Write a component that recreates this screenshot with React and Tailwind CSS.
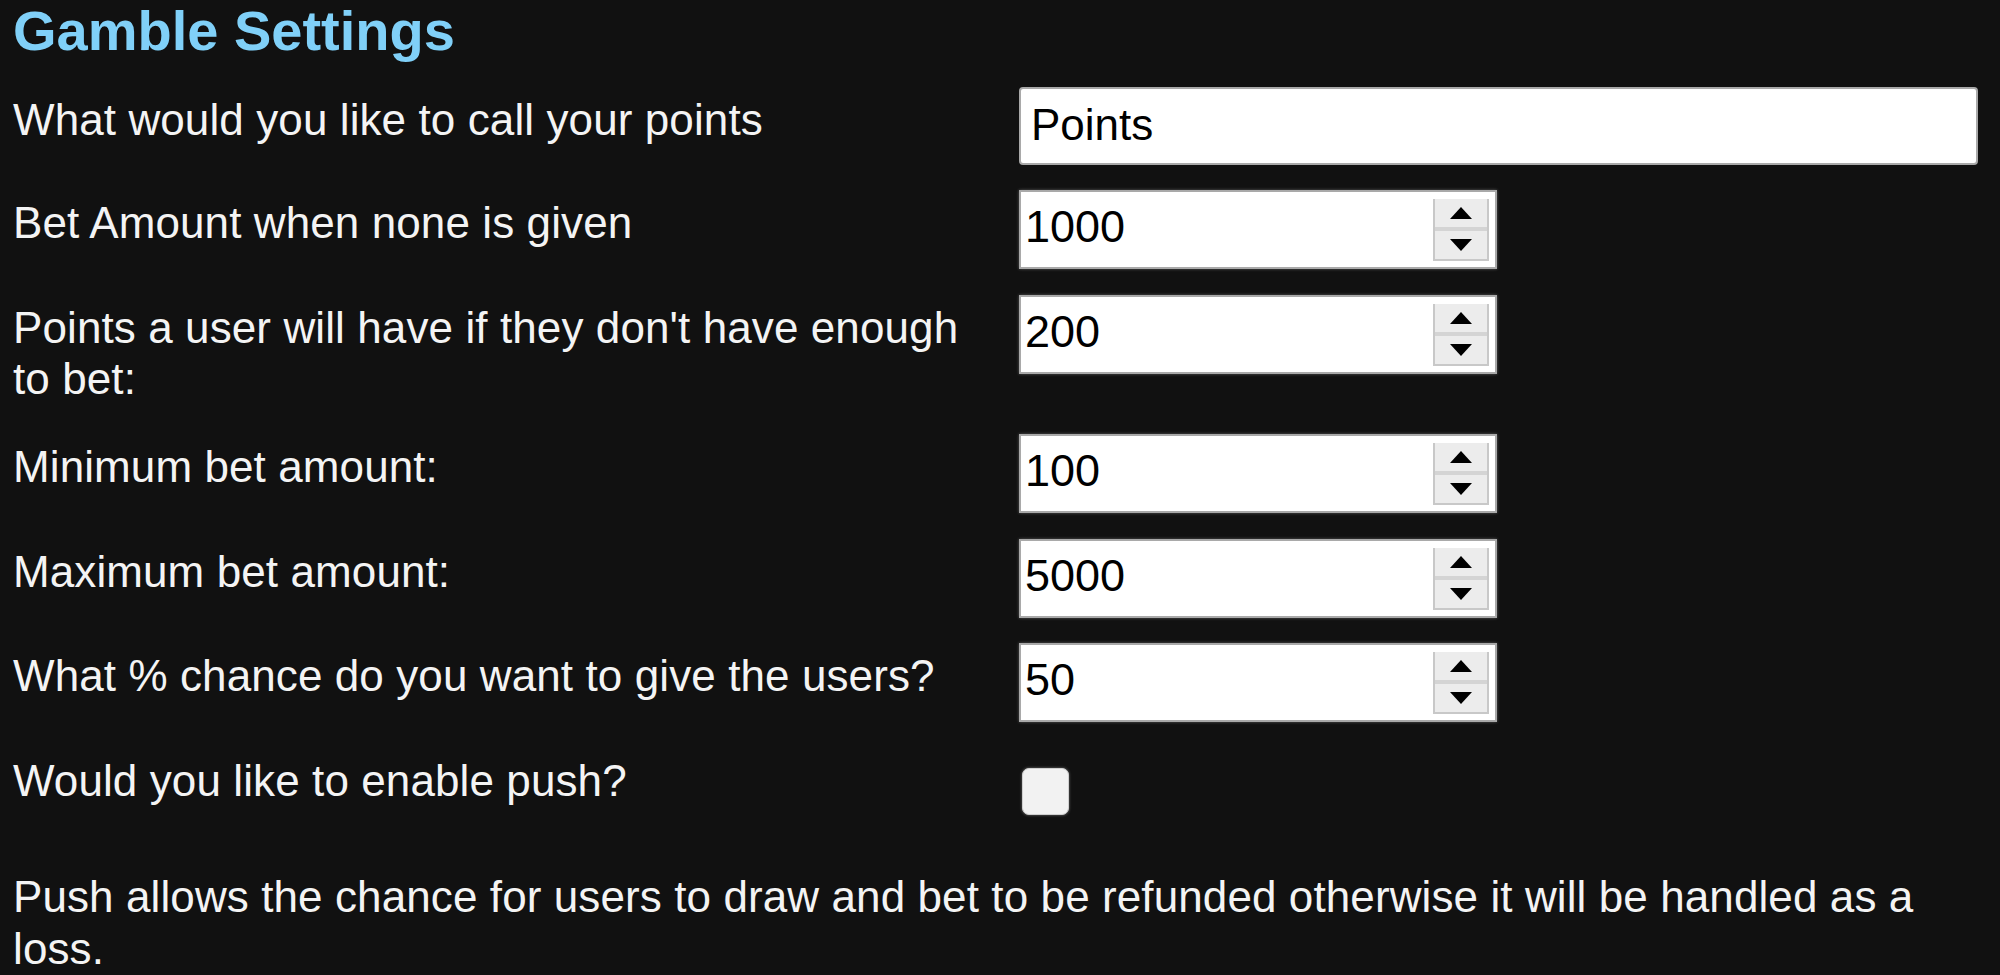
import { useState } from "react";

const font = { fontFamily: '"Liberation Sans", Arial, sans-serif' };

function Spinner({ value }) {
  return (
    <div className="flex h-[79px] w-[478px] items-center border-2 border-[#a9a9a9] bg-white shadow-[0_0_3px_rgba(255,255,255,0.3)]">
      <span className="flex-1 pb-[6px] pl-[4px] text-[45px] leading-none text-black">{value}</span>
      <div className="mr-[6px] flex h-[62px] w-[56px] flex-col border-x-2 border-[#c8c8c8] bg-[#ececec]">
        <div className="flex flex-1 items-center justify-center border-b-4 border-[#d4d4d4]">
          <svg width="22" height="12" viewBox="0 0 22 12">
            <path d="M11 0 L22 12 L0 12 Z" fill="#000" />
          </svg>
        </div>
        <div className="flex flex-1 items-center justify-center border-b-2 border-[#c8c8c8]">
          <svg width="22" height="12" viewBox="0 0 22 12">
            <path d="M0 0 L22 0 L11 12 Z" fill="#000" />
          </svg>
        </div>
      </div>
    </div>
  );
}

function Row({ label, children, className = "" }) {
  return (
    <div className={`flex items-start ${className}`}>
      <div className="w-[1006px] pt-[7px] text-[44px] leading-[51px] tracking-[0.1px] text-[#f4f4f4]">{label}</div>
      {children}
    </div>
  );
}

export default function App() {
  const [push, setPush] = useState(false);

  return (
    <div className="min-h-[975px] w-[2000px] overflow-hidden bg-[#111111] pl-[13px]" style={font}>
      <h1 className="text-[56px] font-bold leading-[62px] text-[#80d0f8]">Gamble Settings</h1>

      <Row label="What would you like to call your points" className="mt-[25px]">
        <div className="flex h-[78px] w-[959px] items-center rounded-[4px] border-2 border-[#a9a9a9] bg-white pb-[2px] pl-[10px] text-[44px] text-black">
          Points
        </div>
      </Row>

      <Row label="Bet Amount when none is given" className="mt-[25px]">
        <Spinner value="1000" />
      </Row>

      <Row
        label={
          <>
            Points a user will have if they don't have enough
            <br />
            to bet:
          </>
        }
        className="mt-[26px]"
      >
        <Spinner value="200" />
      </Row>

      <Row label="Minimum bet amount:" className="mt-[30px]">
        <Spinner value="100" />
      </Row>

      <Row label="Maximum bet amount:" className="mt-[26px]">
        <Spinner value="5000" />
      </Row>

      <Row label="What % chance do you want to give the users?" className="mt-[25px]">
        <Spinner value="50" />
      </Row>

      <Row label="Would you like to enable push?" className="mt-[26px]">
        <button
          onClick={() => setPush(!push)}
          className="ml-[3px] mt-[20px] h-[47px] w-[47px] rounded-[7px] border border-[#cfcfcf] bg-[#f2f2f2] shadow-[0_0_3px_rgba(255,255,255,0.4)]"
        />
      </Row>

      <p className="mt-[56px] w-[1975px] text-[44px] leading-[52px] tracking-[0.1px] text-[#f4f4f4]">
        Push allows the chance for users to draw and bet to be refunded otherwise it will be handled as a loss.
      </p>
    </div>
  );
}
